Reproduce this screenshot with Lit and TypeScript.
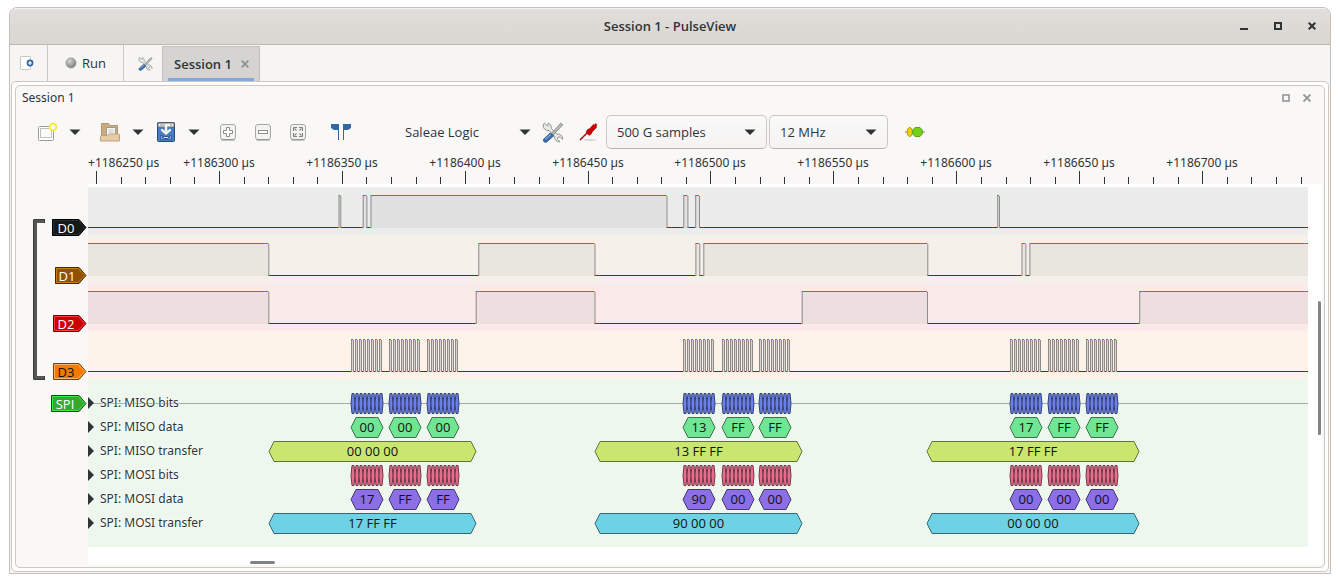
import { LitElement, html, svg, css } from "lit";
import { customElement, property } from "lit/decorators.js";

type Span = [number, number];

interface Channel {
  name: string;
  tint: string;
  fill: string;
  highs: Span[];
  tag: { width: number; face: string; edge: string; shine: string; ink: string };
}

interface AnnotationRow {
  label: string;
  color: string;
  stroke: string;
  kind: "bits" | "data" | "transfer";
  texts: string[];
}

const FAR = 6000;

/* Start of each SPI byte, in canvas pixels */
const BYTES = [263, 301, 339, 595, 634, 671, 922, 960, 998];
const TRANSFERS: Span[] = [[181, 388], [507, 714], [839, 1051]];

const clockPulses: Span[] = BYTES.flatMap((b) =>
  Array.from({ length: 8 }, (_, i): Span => [b + i * 4, b + i * 4 + 2])
);

const CHANNELS: Channel[] = [
  {
    name: "D0", tint: "#ececec", fill: "#e1e1e1",
    highs: [[250.5, 252.3], [274.7, 278.4], [282.5, 578.5], [595.3, 599.4], [607.2, 611], [909.2, 911]],
    tag: { width: 35, face: "#16191a", edge: "#000000", shine: "#2a3032", ink: "#ffffff" },
  },
  {
    name: "D1", tint: "#f5f0ea", fill: "#e9e6df",
    highs: [[-5, 180.3], [390.3, 506.5], [607.4, 611.3], [615.3, 839.3], [933.5, 937.4], [941.4, FAR]],
    tag: { width: 32, face: "#8f5202", edge: "#472900", shine: "#cf7b0c", ink: "#ffffff" },
  },
  {
    name: "D2", tint: "#fbeaea", fill: "#eddfdf",
    highs: [[-5, 180.3], [387.7, 506.5], [713.7, 839], [1051.2, FAR]],
    tag: { width: 34, face: "#cc0000", edge: "#660000", shine: "#ff3f3f", ink: "#ffffff" },
  },
  {
    name: "D3", tint: "#fef3eb", fill: "#d9d3cc",
    highs: clockPulses,
    tag: { width: 34, face: "#f57900", edge: "#7a3c00", shine: "#ffb366", ink: "#111111" },
  },
];

const SPI_TAG = { width: 36, face: "#33a933", edge: "#0d4d0d", shine: "#38ef38", ink: "#ffffff" };

const ANNOTATIONS: AnnotationRow[] = [
  { label: "SPI: MISO bits", color: "#6b80e4", stroke: "#35407a", kind: "bits", texts: [] },
  { label: "SPI: MISO data", color: "#70e694", stroke: "#38734a", kind: "data",
    texts: ["00", "00", "00", "13", "FF", "FF", "17", "FF", "FF"] },
  { label: "SPI: MISO transfer", color: "#c9e66e", stroke: "#647337", kind: "transfer",
    texts: ["00 00 00", "13 FF FF", "17 FF FF"] },
  { label: "SPI: MOSI bits", color: "#e66d8b", stroke: "#733645", kind: "bits", texts: [] },
  { label: "SPI: MOSI data", color: "#8c6ee6", stroke: "#463773", kind: "data",
    texts: ["17", "FF", "FF", "90", "00", "00", "00", "00", "00"] },
  { label: "SPI: MOSI transfer", color: "#6ed2e6", stroke: "#376973", kind: "transfer",
    texts: ["17 FF FF", "90 00 00", "00 00 00"] },
];

const base = css`
  :host {
    font-family: "Open Sans", "Noto Sans", sans-serif;
    font-size: 13px;
    line-height: 18px;
    color: #2e3436;
  }
  * {
    box-sizing: border-box;
  }
  button {
    display: inline-flex;
    align-items: center;
    justify-content: center;
    padding: 0;
    border: 0;
    background: none;
    font: inherit;
    color: inherit;
  }
  svg {
    display: block;
  }
`;

const caret = svg`<svg width="12" height="6" viewBox="0 0 12 6"><path d="M.5 .5h11L6 6z" fill="#2e3436"/></svg>`;

const toolsIcon = (size: number) => svg`
  <svg width=${size} height=${size} viewBox="0 0 22 22">
    <path d="M2.2 2.2 5.6 5 6.6 2 A5 5 0 0 1 9.3 7.3 L15 13.2 A4.6 4.6 0 0 1 20.6 18.4 L18 15.8 15.8 16.4 15.5 18.4 18 20.8 A4.6 4.6 0 0 1 12.6 15.4 L7 9.4 A4.8 4.8 0 0 1 1.2 4z"
      fill="#e9e9e7" stroke="#8b8d89" stroke-width=".9" stroke-linejoin="round"/>
    <path d="M9.4 12.6 18.8 2.2l2 1.6L11.2 14z" fill="#b9bbb8" stroke="#777a76" stroke-width=".8"/>
    <path d="M8.3 12 11.6 15 4.4 21.2Q1 21.6 1.4 18.4z" fill="#3f6fae" stroke="#204a87" stroke-width=".8"/>
    <path d="M3.4 18.2 8.6 13.6" stroke="#8fb3e0" stroke-width="1.1"/>
  </svg>`;

const zoomFrame = (glyph: unknown) => svg`
  <svg width="18" height="18" viewBox="0 0 18 18">
    <rect x="1.5" y="1.5" width="15" height="15" rx="2.5" fill="#f3f3f1" stroke="#a6a8a3"/>
    <path d="M2.5 17h13" stroke="#8b8d89" stroke-width="1"/>
    ${glyph}
  </svg>`;

@customElement("pv-tag")
class PvTag extends LitElement {
  static styles = [base, css`
    :host { display: block; height: 17px; }
    .label { font-size: 13px; }
  `];

  @property() text = "";
  @property({ attribute: false }) look = SPI_TAG;

  render() {
    const { width: w, face, edge, shine, ink } = this.look;
    return html`
      <button aria-label=${this.text}>
        <svg width=${w} height="17">
          <path d="M.5 .5H${w - 8}L${w - 1} 8.5L${w - 8} 16.5H.5z" fill=${face} stroke=${edge}/>
          <path d="M1.5 1.5H${w - 9}L${w - 2} 8.5L${w - 9} 15.5H1.5z" fill="none" stroke=${shine}/>
          <text class="label" x=${Math.round((w - 8) / 2)} y="14" text-anchor="middle" fill=${ink}>${this.text}</text>
        </svg>
      </button>`;
  }
}

@customElement("pv-ruler")
class PvRuler extends LitElement {
  static styles = [base, css`
    :host { display: block; overflow: hidden; }
    .scale { width: 100%; height: 31px; }
    .value { font-family: "Noto Sans", sans-serif; font-size: 12px; fill: #2e3436; }
  `];

  render() {
    const step = 122.9;
    const majors = Array.from({ length: 10 }, (_, i) => i);
    return html`
      <svg class="scale">
        ${majors.map((i) => {
          const x = Math.floor(8.4 + i * step);
          return svg`
            <rect x=${x} y="18" width="1" height="13" fill="#2e3436"/>
            ${[1, 2, 3, 4].map((m) => svg`
              <rect x=${Math.floor(8.6 + i * step + (m * step) / 5)} y="24" width="1" height="7" fill="#2e3436"/>`)}
            <text class="value" x=${i === 0 ? 0 : x} y="14" text-anchor=${i === 0 ? "start" : "middle"}>+${1186250 + i * 50} µs</text>`;
        })}
      </svg>`;
  }
}

@customElement("pv-wave")
class PvWave extends LitElement {
  static styles = [base, css`
    :host { display: block; overflow: hidden; }
    .wave { width: 100%; height: 48px; }
  `];

  @property({ attribute: false }) channel!: Channel;

  render() {
    const { highs, tint, fill } = this.channel;
    return html`
      <svg class="wave">
        <rect width="100%" height="48" fill=${tint}/>
        <rect y="40" width="100%" height="1" fill="#c00000"/>
        ${highs.map(([a, b]) => svg`
          <rect x=${a} y="8" width=${b - a} height="33" fill=${fill}/>
          <rect x=${a} y="8" width=${b - a} height="1" fill="#00c000"/>
          <rect x=${a} y="9" width="1" height="32" fill="#8c8b89"/>
          <rect x=${b} y="9" width="1" height="32" fill="#8c8b89"/>`)}
      </svg>`;
  }
}

@customElement("pv-annotations")
class PvAnnotations extends LitElement {
  static styles = [base, css`
    :host { display: block; position: relative; height: 24px; overflow: hidden; }
    .track { position: absolute; inset: 0; width: 100%; height: 24px; }
    .title {
      position: relative;
      display: flex;
      align-items: center;
      gap: 6px;
      height: 24px;
    }
    .name {
      font-family: "Noto Sans", sans-serif;
      font-size: 12px;
      text-shadow: 1px 0 #fff9, -1px 0 #fff9, 0 1px #fff9, 0 -1px #fff9;
    }
    .value { font-size: 13px; fill: #111; }
  `];

  @property({ attribute: false }) row!: AnnotationRow;
  @property({ type: Boolean }) axis = false;

  private hexagon([a, b]: Span, text: string) {
    const { color, stroke } = this.row;
    return svg`
      <path d="M${a} 12.5L${a + 5} 2.5H${b - 5}L${b} 12.5L${b - 5} 22.5H${a + 5}z" fill=${color} stroke=${stroke}/>
      <text class="value" x=${(a + b) / 2} y="17" text-anchor="middle">${text}</text>`;
  }

  private bit(x: number) {
    const { color, stroke } = this.row;
    return svg`<path d="M${x} 12.5L${x + 1} 2.5H${x + 3}L${x + 4} 12.5L${x + 3} 22.5H${x + 1}z" fill=${color} stroke=${stroke}/>`;
  }

  render() {
    const { kind, texts, label } = this.row;
    return html`
      <svg class="track">
        ${this.axis ? svg`<rect y="12" width="100%" height="1" fill="#a5ada6"/>` : null}
        ${kind === "bits"
          ? BYTES.flatMap((b) => Array.from({ length: 8 }, (_, i) => this.bit(b + i * 4)))
          : kind === "data"
            ? BYTES.map((b, i) => this.hexagon([b, b + 32], texts[i]))
            : TRANSFERS.map((t, i) => this.hexagon(t, texts[i]))}
      </svg>
      <div class="title">
        <svg width="6" height="12" viewBox="0 0 6 12"><path d="M0 0l6 6-6 6z" fill="#2e3436"/></svg>
        <span class="name">${label}</span>
      </div>`;
  }
}

@customElement("app-root")
class AppRoot extends LitElement {
  static styles = [base, css`
    :host {
      display: block;
      padding: 7px 9px 9px;
      background: #fff;
    }
    .window {
      border: 1px solid #c2bfbc;
      border-radius: 8px 8px 0 0;
      background: #f6f5f4;
      overflow: hidden;
    }
    .titlebar {
      display: grid;
      grid-template-columns: 1fr auto 1fr;
      align-items: center;
      height: 37px;
      border-bottom: 1px solid #bfb8b1;
      background: linear-gradient(#e1dedb, #dad6d2);
      box-shadow: inset 0 1px #f4f2f1;
    }
    .caption {
      grid-column: 2;
      margin: 0;
      font-size: 13px;
      line-height: 18px;
      font-weight: 600;
    }
    .window-buttons {
      justify-self: end;
      display: flex;
      gap: 10px;
      padding-right: 6px;
    }
    .window-buttons button { width: 24px; height: 24px; }
    .tabs {
      display: flex;
      align-items: stretch;
      height: 36px;
    }
    .tool { width: 38px; border-right: 1px solid #ccc8c4; }
    .tool.plain { padding-left: 4px; border: 0; }
    .page { padding-right: 4px; }
    .run { width: 76px; gap: 5px; border-right: 1px solid #ccc8c4; }
    .tab {
      position: relative;
      display: flex;
      align-items: center;
      gap: 9px;
      padding: 0 10px 0 11px;
      border: 1px solid #c5c0bb;
      border-bottom: 0;
      background: #d6d4d2;
      font-weight: 600;
      margin: 1px 0 0;
    }
    .tab::after {
      content: "";
      position: absolute;
      left: 5px;
      right: 5px;
      bottom: 0;
      height: 3px;
      background: #83a8dc;
    }
    .frame {
      margin: 0 1px 1px;
      padding: 3px;
      border: 1px solid #cdc7c2;
      border-radius: 5px;
      background: #fff;
    }
    .dock {
      padding: 0 2px 2px 0;
      border: 1px solid #cdc7c2;
      border-radius: 5px;
      background: #f9f8f7;
    }
    .dock-title {
      display: flex;
      align-items: center;
      height: 25px;
      padding: 0 5px 1px 6px;
    }
    .dock-title h2 {
      flex: 1;
      margin: 0;
      font-family: "Noto Sans", sans-serif;
      font-size: 12px;
      font-weight: 400;
    }
    .dock-title button { width: 21px; height: 20px; }
    .toolbar {
      display: flex;
      align-items: center;
      height: 42px;
      padding-left: 19px;
    }
    .icon { width: 24px; height: 34px; }
    .drop { width: 32px; height: 34px; }
    .split { display: flex; }
    .split.first { margin-right: 7px; }
    .zoom { display: flex; gap: 11px; padding-left: 6px; }
    .cursors { margin-left: 8px; }
    .device {
      justify-content: space-between;
      width: 126px;
      height: 34px;
      margin-left: 52px;
    }
    .setup { display: flex; gap: 11px; margin: 0 6px 0 10px; }
    .pick { position: relative; display: block; }
    .pick select {
      display: block;
      appearance: none;
      width: 100%;
      height: 34px;
      padding: 0 30px 0 10px;
      border: 1px solid #cdc7c2;
      border-bottom-color: #b8b1aa;
      border-radius: 5px;
      background: linear-gradient(#fbfafa, #f4f3f2);
      font: inherit;
      color: inherit;
    }
    .pick svg { position: absolute; right: 11px; top: 14px; pointer-events: none; }
    .samples { width: 161px; margin-right: 2px; }
    .rate { width: 119px; margin-right: 15px; }
    .view {
      display: grid;
      grid-template-columns: 72px minmax(0, 1fr);
    }
    .headers {
      grid-row: 1 / span 2;
      display: flex;
      flex-direction: column;
      gap: 15px;
      padding: 66px 1px 0 17px;
    }
    .group { display: flex; }
    .bracket {
      width: 12px;
      border: 4px solid #555753;
      border-right: 0;
      border-radius: 2px 0 0 2px;
      outline: 1px solid #3a3b39;
      outline-offset: -1px;
      clip-path: polygon(0 0, 100% 0, 100% 4px, 4px 4px, 4px calc(100% - 4px), 100% calc(100% - 4px), 100% 100%, 0 100%);
    }
    .members {
      flex: 1;
      display: flex;
      flex-direction: column;
      align-items: flex-end;
      gap: 31px;
    }
    .decoder { align-self: flex-end; }
    .canvas {
      display: grid;
      grid-template-columns: minmax(0, 1fr) 14px;
      padding-top: 3px;
      background: #fff;
    }
    .ruler { margin-right: 14px; }
    .spi { padding: 12px 0; background: #edf7ee; }
    .vertical { padding: 114px 0 0 10px; }
    .thumb { border-radius: 2px; background: #7f8384; }
    .vertical .thumb { width: 3px; height: 134px; }
    .horizontal { padding: 14px 0 1px 162px; }
    .horizontal .thumb { width: 25px; height: 3px; }
  `];

  render() {
    return html`
      <main class="window">
        <header class="titlebar">
          <h1 class="caption">Session 1 - PulseView</h1>
          <div class="window-buttons">
            <button aria-label="Minimize"><svg width="8" height="8"><rect y="6" width="8" height="2" fill="#2e3436"/></svg></button>
            <button aria-label="Maximize"><svg width="8" height="8"><rect x="1" y="1" width="6" height="6" fill="none" stroke="#2e3436" stroke-width="2"/></svg></button>
            <button aria-label="Close"><svg width="8" height="8"><path d="M.7 .7l6.6 6.6M7.3 .7L.7 7.3" stroke="#2e3436" stroke-width="2"/></svg></button>
          </div>
        </header>

        <nav class="tabs">
          <button class="tool page" aria-label="New session">
            <svg width="14" height="14" viewBox="0 0 14 14">
              <rect x=".5" y=".5" width="10" height="13" rx=".6" fill="#fff" stroke="#c4c6c2"/>
              <circle cx="10" cy="7" r="3.4" fill="#3465a4"/>
              <path d="M8 7h4M10 5v4" stroke="#fff" stroke-width="1.2"/>
            </svg>
          </button>
          <button class="run">
            <svg width="12" height="12" viewBox="0 0 12 12">
              <defs><radialGradient id="bulb" cx=".35" cy=".3" r=".75"><stop offset="0" stop-color="#d6d7d3"/><stop offset="1" stop-color="#7b7e79"/></radialGradient></defs>
              <circle cx="6" cy="6" r="5" fill="url(#bulb)" stroke="#8f918d" stroke-width=".8"/>
            </svg>
            Run
          </button>
          <button class="tool plain" aria-label="Settings">${toolsIcon(15)}</button>
          <div class="tab">
            Session 1
            <button aria-label="Close tab"><svg width="8" height="8"><path d="M.7 .7l6.6 6.6M7.3 .7L.7 7.3" stroke="#8e9192" stroke-width="1.8"/></svg></button>
          </div>
        </nav>

        <div class="frame">
          <section class="dock">
            <div class="dock-title">
              <h2>Session 1</h2>
              <button aria-label="Float"><svg width="8" height="8"><rect x="1" y="1" width="6" height="6" fill="none" stroke="#919495" stroke-width="1.6"/></svg></button>
              <button aria-label="Close session"><svg width="8" height="8"><path d="M.5 .5l7 7M7.5 .5l-7 7" stroke="#919495" stroke-width="1.8"/></svg></button>
            </div>

            <div class="toolbar">
              <div class="split first">
                <button class="icon" aria-label="New">
                  <svg width="22" height="20" viewBox="0 0 22 20">
                    <rect x="2.5" y="4.5" width="15" height="14" rx="1" fill="#fff" stroke="#9a9c98"/>
                    <rect x="4.5" y="6.5" width="11" height="9" fill="#fbfbfa" stroke="#c0c1be"/>
                    <circle cx="17" cy="5" r="3.4" fill="#fff" stroke="#f4ee2a" stroke-width="2"/>
                  </svg>
                </button>
                <button class="drop" aria-label="New menu">${caret}</button>
              </div>
              <div class="split">
                <button class="icon" aria-label="Open">
                  <svg width="20" height="20" viewBox="0 0 20 20">
                    <path d="M1.5 16V1.5h7l1.5 2h7.5V16z" fill="#c9ac82" stroke="#b4966a"/>
                    <rect x="6.5" y="5.5" width="9" height="9" fill="#f7f7f5" stroke="#9a9c98"/>
                    <path d="M8.5 8h5M8.5 10h5" stroke="#c4c5c2"/>
                    <path d="M.5 14.5q0-1 1-1h6l1.5-1.5h9.500q1 0 1 1v6H.5z" fill="#e6cda9" stroke="#c2a173"/>
                  </svg>
                </button>
                <button class="drop" aria-label="Open menu">${caret}</button>
              </div>
              <div class="split">
                <button class="icon" aria-label="Save">
                  <svg width="18" height="20" viewBox="0 0 18 20">
                    <rect x=".5" y=".5" width="17" height="19" rx="1" fill="#4a7cc0" stroke="#204a87"/>
                    <path d="M1 5V2q0-1 1-1h14q1 0 1 1v3z" fill="#f4f4f2" stroke="#6d706c"/>
                    <path d="M3 3h5M13 3h2" stroke="#8b8d89"/>
                    <path d="M9 3v6" stroke="#f7f7f5" stroke-width="2.4"/>
                    <path d="M4 7h1.500L9 9.500 12.500 7H14v1.800L9 13 4 8.800z" fill="#f7f7f5"/>
                    <path d="M3.500 13.500v4h11v-4h-2v2h-7v-2z" fill="#7aa0d4" stroke="#204a87" stroke-width=".6"/>
                    <rect x="6.500" y="14.500" width="5" height="2" rx="1" fill="#f1f1ef" stroke="#204a87"/>
                  </svg>
                </button>
                <button class="drop" aria-label="Save menu">${caret}</button>
              </div>
              <div class="zoom">
                <button class="icon" aria-label="Zoom in">${zoomFrame(svg`<path d="M7.5 4.5h3v3h3v3h-3v3h-3v-3h-3v-3h3z" fill="#fff" stroke="#8b8d89"/>`)}</button>
                <button class="icon" aria-label="Zoom out">${zoomFrame(svg`<rect x="4.5" y="7.5" width="9" height="3" fill="#fff" stroke="#8b8d89"/>`)}</button>
                <button class="icon" aria-label="Zoom to fit">${zoomFrame(svg`<path d="M4.500 8V4.500H8M13.500 8V4.500H10M4.500 10v3.500H8M13.500 10v3.500H10" fill="none" stroke="#7d807b"/><path d="M5.500 5.500l2 2M12.500 5.500l-2 2M5.500 12.500l2-2M12.500 12.500l-2-2" stroke="#8b8d89" stroke-width="1.2"/>`)}</button>
                <button class="icon cursors" aria-label="Show cursors">
                  <svg width="20" height="18" viewBox="0 0 20 18"><path d="M0 1h8v16H7V7H3L0 5zM20 1h-8v16h1V7h4l3-2z" fill="#3465a4"/></svg>
                </button>
              </div>
              <button class="device"><span>Saleae Logic</span>${caret}</button>
              <div class="setup">
                <button class="icon" aria-label="Configure device">${toolsIcon(22)}</button>
                <button class="icon" aria-label="Configure channels">
                  <svg width="20" height="20" viewBox="0 0 20 20">
                    <ellipse cx="12" cy="18" rx="6.5" ry="1" fill="#d9d8d7"/>
                    <path d="M2 18 9 11" stroke="#a40000" stroke-width="1.4"/>
                    <path d="M8 10l2-3 1 .2 4.4-4.8 1.2.3L18 1.6 19 3l-.8 1.2.3 1.2-4.6 4.8-.2 1.3-2.7 1.9z" fill="#cc0000" stroke="#a40000" stroke-width=".6"/>
                  </svg>
                </button>
              </div>
              <label class="pick samples">
                <select aria-label="Sample count"><option>500 G samples</option></select>${caret}
              </label>
              <label class="pick rate">
                <select aria-label="Sample rate"><option>12 MHz</option></select>${caret}
              </label>
              <button class="icon" aria-label="Add protocol decoder">
                <svg width="20" height="12" viewBox="0 0 20 12">
                  <path d="M0 6h20" stroke="#a5a6a3" stroke-width="1.4"/>
                  <ellipse cx="4.8" cy="6" rx="2.5" ry="4.4" fill="#edd400" stroke="#b59a00"/>
                  <path d="M10 1.5h5L17.3 4v4L15 10.5h-5L7.8 8V4z" fill="#73d216" stroke="#5aa812"/>
                </svg>
              </button>
            </div>

            <div class="view">
              <div class="headers">
                <div class="group">
                  <div class="bracket"></div>
                  <div class="members">
                    ${CHANNELS.map((c) => html`<pv-tag .text=${c.name} .look=${c.tag}></pv-tag>`)}
                  </div>
                </div>
                <pv-tag class="decoder" text="SPI"></pv-tag>
              </div>
              <pv-ruler class="ruler"></pv-ruler>
              <div class="canvas">
                <div class="traces">
                  ${CHANNELS.map((c) => html`<pv-wave .channel=${c}></pv-wave>`)}
                  <div class="spi">
                    ${ANNOTATIONS.map((r, i) => html`<pv-annotations .row=${r} ?axis=${i === 0}></pv-annotations>`)}
                  </div>
                  <div class="horizontal"><div class="thumb"></div></div>
                </div>
                <div class="vertical"><div class="thumb"></div></div>
              </div>
            </div>
          </section>
        </div>
      </main>`;
  }
}
